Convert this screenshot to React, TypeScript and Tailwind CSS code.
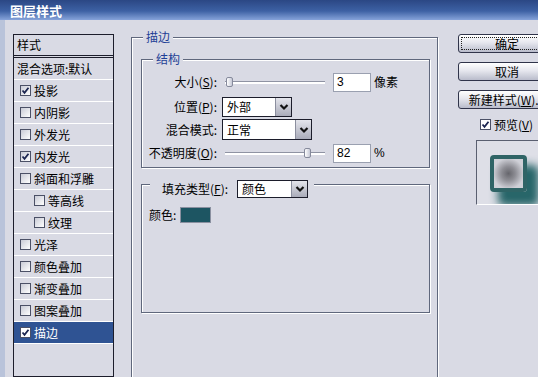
import React from "react";

const font = "font-['Noto_Sans_CJK_SC','Noto_Sans',sans-serif]";

type Item = { label: string; checked?: boolean; indent?: boolean; selected?: boolean };

const items: Item[] = [
  { label: "投影", checked: true },
  { label: "内阴影" },
  { label: "外发光" },
  { label: "内发光", checked: true },
  { label: "斜面和浮雕" },
  { label: "等高线", indent: true },
  { label: "纹理", indent: true },
  { label: "光泽" },
  { label: "颜色叠加" },
  { label: "渐变叠加" },
  { label: "图案叠加" },
  { label: "描边", checked: true, selected: true },
];

function Check({ checked, light }: { checked?: boolean; light?: boolean }) {
  return (
    <span
      className={`flex h-[11px] w-[11px] shrink-0 items-center justify-center border border-[#4b5066] ${
        light ? "bg-white" : "bg-[linear-gradient(135deg,#c9cbd6,#ffffff)]"
      }`}
    >
      {checked && (
        <svg width="9" height="9" viewBox="0 0 9 9">
          <polyline points="1.5,4.5 3.5,6.8 7.5,1.8" fill="none" stroke="#1b2550" strokeWidth="1.8" />
        </svg>
      )}
    </span>
  );
}

function Arrow() {
  return (
    <span className="flex h-full w-[16px] shrink-0 items-center justify-center border-l border-[#8b8e9e] bg-[linear-gradient(to_bottom,#e4e5ec,#a9abb9)]">
      <svg width="10" height="8" viewBox="0 0 10 8">
        <polyline points="1.5,2 5,5.5 8.5,2" fill="none" stroke="#111" strokeWidth="2.2" />
      </svg>
    </span>
  );
}

function Select({ value, w, h = 20 }: { value: string; w: number; h?: number }) {
  return (
    <div
      className="flex items-stretch border border-[#1c1d2b] bg-white"
      style={{ width: w, height: h }}
    >
      <span className="flex flex-1 items-center pl-[4px] text-[12px] leading-none">{value}</span>
      <Arrow />
    </div>
  );
}

function Slider({ pos }: { pos: number }) {
  return (
    <div className="relative flex h-[20px] w-[100px] items-center">
      <div className="h-[3px] w-full border-t border-[#8f93a3] bg-white" />
      <span
        className="absolute top-[5px] h-[10px] w-[7px] rounded-[2px] border border-[#868a9c] bg-[linear-gradient(to_right,#ffffff,#c5c8d6)]"
        style={{ left: pos }}
      />
    </div>
  );
}

function NumBox({ value }: { value: string }) {
  return (
    <div className="flex h-[19px] w-[38px] items-center border border-[#9aa0b0] bg-white pl-[3px] font-['Liberation_Sans',Arial,sans-serif] text-[12px] leading-none">
      {value}
    </div>
  );
}

function Btn({ children, focus }: { children: React.ReactNode; focus?: boolean }) {
  return (
    <div className="flex h-[19px] w-[98px] items-center justify-center rounded-[3px] border border-[#30344a] bg-[linear-gradient(to_bottom,#ffffff,#e6e7ee_45%,#b9bccb)] p-[2px]">
      <div
        className={`flex h-full w-full items-center justify-center whitespace-nowrap text-[12px] leading-none ${
          focus ? "border border-dotted border-[#222]" : ""
        }`}
      >
        {children}
      </div>
    </div>
  );
}

const U = ({ c }: { c: string }) => <span className="underline underline-offset-[1px]">{c}</span>;

export default function App() {
  return (
    <div className={`${font} h-[377px] w-[538px] overflow-hidden bg-[#d9dae4] text-black`}>
      <div className="flex h-[20px] items-center bg-[linear-gradient(to_bottom,#2b4784,#3d61a4_55%,#86a3da)] pl-[10px] text-[13px] font-bold leading-none text-white">
        图层样式
      </div>
      <div className="flex h-[357px]">
        <div className="w-[5px] shrink-0 bg-[#b9c3da]" />
        {/* left list */}
        <div className="ml-[8px] mt-[14px] flex w-[101px] shrink-0 flex-col border border-[#1c1d2b] text-[12px] leading-none">
          <div className="flex h-[23px] items-center border-b-[3px] border-double border-[#1c1d2b] pl-[3px]">样式</div>
          <div className="flex h-[22px] items-center border-b border-white pl-[3px]">混合选项:默认</div>
          {items.map((it) => (
            <div
              key={it.label}
              className={`flex h-[22px] items-center gap-[3px] border-b border-white ${
                it.indent ? "pl-[20px]" : "pl-[6px]"
              } ${it.selected ? "bg-[#2f5393] text-white" : ""}`}
            >
              <Check checked={it.checked} light={it.selected} />
              <span>{it.label}</span>
            </div>
          ))}
        </div>

        {/* main group */}
        <div className="ml-[17px] mt-[17px] flex h-[400px] w-[307px] shrink-0 flex-col border border-[#5f677c] shadow-[inset_1px_1px_0_#fff,1px_1px_0_#fff] text-[12px] leading-none">
          <div className="-mt-[8px] ml-[11px] flex h-[14px] w-fit items-center bg-[#d9dae4] px-[3px] text-[#1f3f96]">描边</div>

          {/* structure */}
          <div className="ml-[9px] mr-[7px] mt-[15px] flex h-[109px] flex-col border border-[#5f677c] shadow-[inset_1px_1px_0_#fff,1px_1px_0_#fff]">
            <div className="-mt-[8px] ml-[11px] flex h-[14px] w-fit items-center bg-[#d9dae4] px-[3px] text-[#1f3f96]">结构</div>
            <div className="mt-[6px] flex h-[20px] items-center">
              <span className="w-[75px] text-right">大小(<U c="S" />):</span>
              <span className="ml-[8px]"><Slider pos={1} /></span>
              <span className="ml-[8px]"><NumBox value="3" /></span>
              <span className="ml-[3px]">像素</span>
            </div>
            <div className="mt-[5px] flex h-[20px] items-center">
              <span className="w-[75px] text-right">位置(<U c="P" />):</span>
              <span className="ml-[5px]"><Select value="外部" w={70} /></span>
            </div>
            <div className="mt-[2px] flex h-[21px] items-center">
              <span className="w-[75px] text-right">混合模式:</span>
              <span className="ml-[5px]"><Select value="正常" w={90} h={21} /></span>
            </div>
            <div className="mt-[3px] flex h-[20px] items-center">
              <span className="w-[75px] text-right">不透明度(<U c="O" />):</span>
              <span className="ml-[8px]"><Slider pos={79} /></span>
              <span className="ml-[8px]"><NumBox value="82" /></span>
              <span className="ml-[3px] font-['Liberation_Sans',Arial,sans-serif]">%</span>
            </div>
          </div>

          {/* fill */}
          <div className="ml-[9px] mr-[7px] mt-[16px] flex h-[129px] flex-col border border-[#5f677c] shadow-[inset_1px_1px_0_#fff,1px_1px_0_#fff]">
            <div className="-mt-[5px] ml-[8px] flex h-[18px] w-fit items-center bg-[#d9dae4] pl-[12px] pr-[6px]">
              <span>填充类型(<U c="F" />):</span>
              <span className="ml-[9px]"><Select value="颜色" w={71} h={18} /></span>
            </div>
            <div className="ml-[7px] mt-[9px] flex h-[16px] items-center">
              <span>颜色:</span>
              <span className="ml-[4px] h-[16px] w-[31px] border border-[#8a90a0] bg-[#1d5562]" />
            </div>
          </div>
        </div>

        {/* right column */}
        <div className="ml-[20px] mt-[14px] flex w-[98px] shrink-0 flex-col text-[12px] leading-none">
          <Btn focus>确定</Btn>
          <div className="mt-[9px]"><Btn>取消</Btn></div>
          <div className="mt-[9px]"><Btn>新建样式(<U c="W" />)...</Btn></div>
          <div className="ml-[22px] mt-[10px] flex h-[11px] items-center gap-[3px]">
            <Check checked light />
            <span>预览(<U c="V" />)</span>
          </div>
          <div className="ml-[18px] mt-[10px] flex h-[65px] w-[80px] items-start overflow-hidden border-l border-t border-b border-[#5a5f70] border-b-white bg-[#dedfe7] pl-[13px] pt-[14px]">
            <div className="h-[37px] w-[37px] rounded-[4px] border-[4px] border-[#2f6466] bg-[radial-gradient(circle,#66666c_0%,#8f8f96_35%,#cfd0d7_75%)] shadow-[10px_12px_8px_2px_rgba(30,95,98,0.95)]" />
          </div>
        </div>
      </div>
    </div>
  );
}
